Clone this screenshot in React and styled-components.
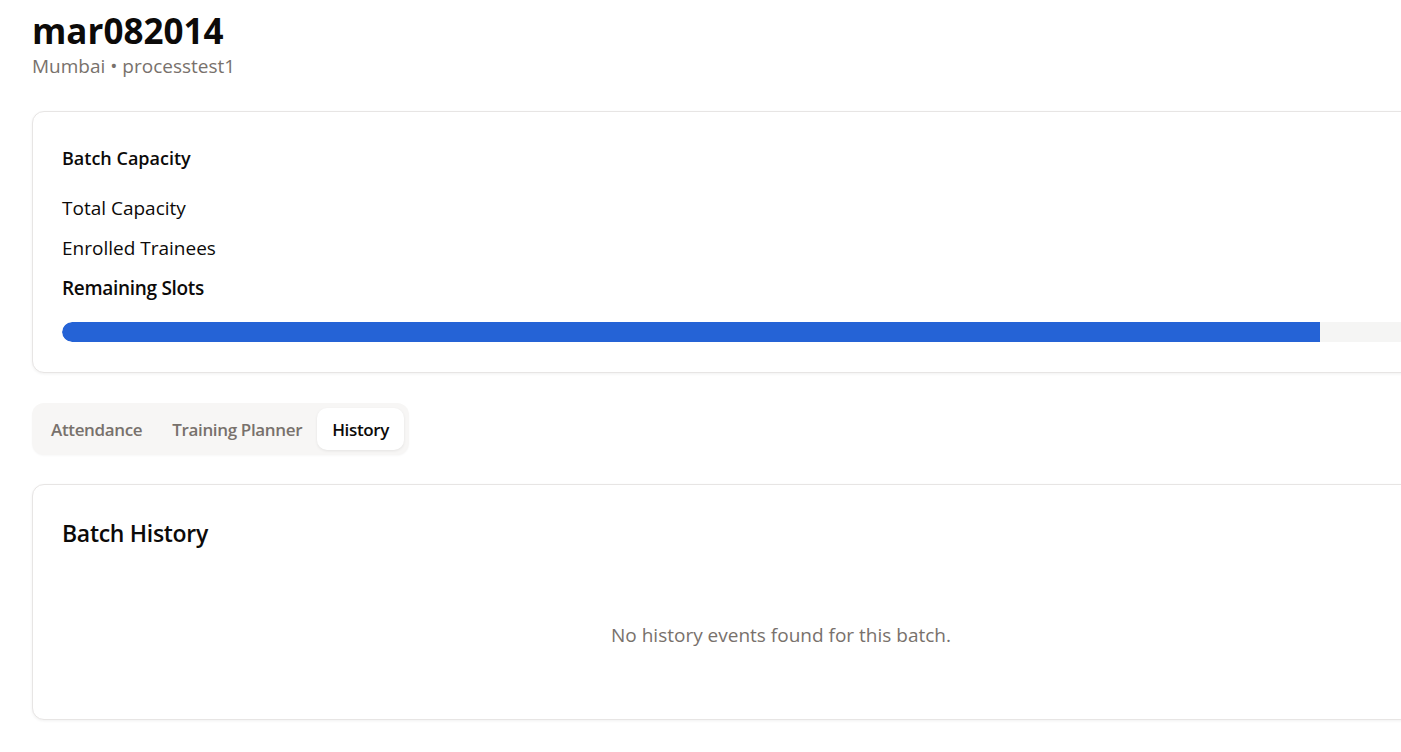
import styled, { createGlobalStyle } from "styled-components";

const GlobalStyle = createGlobalStyle`
  html, body {
    margin: 0;
    padding: 0;
    background: #ffffff;
    overflow: hidden;
  }
  body {
    font-family: "Open Sans", "Noto Sans", sans-serif;
    color: #0c0a09;
  }
`;

const Page = styled.div`
  width: 1498px;
  padding: 9px 0 32px 32px;
  display: flex;
  flex-direction: column;
`;

const Header = styled.header`
  display: flex;
  flex-direction: column;
  margin-bottom: 32px;
`;

const Title = styled.h1`
  margin: 0;
  font-size: 35px;
  font-weight: 700;
  line-height: 44px;
  color: #0c0a09;
`;

const Subtitle = styled.p`
  margin: 0;
  font-size: 19px;
  line-height: 26px;
  color: #78716c;
`;

const Card = styled.section`
  background: #fff;
  border: 1px solid #e7e5e4;
  border-radius: 12px;
  box-shadow: 0 1px 3px rgba(0, 0, 0, 0.06);
  padding: ${(p) => p.$padding || "30px"};
  display: flex;
  flex-direction: column;
`;

const CardTitle = styled.h2`
  margin: 0;
  font-weight: 600;
  font-size: ${(p) => (p.$large ? "23px" : "18px")};
  line-height: ${(p) => (p.$large ? "32px" : "26px")};
  letter-spacing: ${(p) => (p.$large ? "-0.3px" : "0")};
  color: #0c0a09;
`;

const StatList = styled.div`
  display: flex;
  flex-direction: column;
  gap: 14px;
  margin-top: 24px;
`;

const StatRow = styled.div`
  font-size: 19px;
  line-height: 26px;
  font-weight: ${(p) => (p.$strong ? 600 : 400)};
  letter-spacing: ${(p) => (p.$strong ? "-0.3px" : "0")};
  color: #0c0a09;
`;

const Track = styled.div`
  margin-top: 21px;
  height: 20px;
  border-radius: 10px;
  background: #f5f5f4;
  overflow: hidden;
`;

const Fill = styled.div`
  height: 100%;
  background: #2563d6;
  border-radius: 10px 0 0 10px;
`;

const TabList = styled.nav`
  align-self: flex-start;
  display: flex;
  margin: 30px 0 29px;
  padding: 5px 5px 5px 4px;
  background: #f7f6f5;
  border-radius: 12px;
  box-shadow: 0 1px 2px rgba(0, 0, 0, 0.03);
`;

const Tab = styled.button`
  border: none;
  font-family: inherit;
  font-size: 17px;
  font-weight: 600;
  letter-spacing: -0.35px;
  padding: 8px 15px;
  height: 42px;
  border-radius: 10px;
  cursor: pointer;
  background: ${(p) => (p.$active ? "#ffffff" : "transparent")};
  color: ${(p) => (p.$active ? "#0c0a09" : "#78716c")};
  box-shadow: ${(p) => (p.$active ? "0 1px 3px rgba(0,0,0,0.08)" : "none")};
`;

const Empty = styled.p`
  margin: 73px 0 0;
  text-align: center;
  font-size: 19px;
  line-height: 26px;
  color: #78716c;
`;

const tabs = ["Attendance", "Training Planner", "History"];

function App() {
  const capacity = 40;
  const enrolled = 35;
  const pct = (enrolled / capacity) * 100;

  return (
    <>
      <GlobalStyle />
      <Page>
        <Header>
          <Title>mar082014</Title>
          <Subtitle>Mumbai • processtest1</Subtitle>
        </Header>

        <Card $padding="33px 29px 30px">
          <CardTitle>Batch Capacity</CardTitle>
          <StatList>
            <StatRow>Total Capacity</StatRow>
            <StatRow>Enrolled Trainees</StatRow>
            <StatRow $strong>Remaining Slots</StatRow>
          </StatList>
          <Track>
            <Fill style={{ width: `${pct}%` }} />
          </Track>
        </Card>

        <TabList>
          {tabs.map((t) => (
            <Tab key={t} $active={t === "History"}>
              {t}
            </Tab>
          ))}
        </TabList>

        <Card $padding="32px 29px 71px">
          <CardTitle $large>Batch History</CardTitle>
          <Empty>No history events found for this batch.</Empty>
        </Card>
      </Page>
    </>
  );
}

export default App;
